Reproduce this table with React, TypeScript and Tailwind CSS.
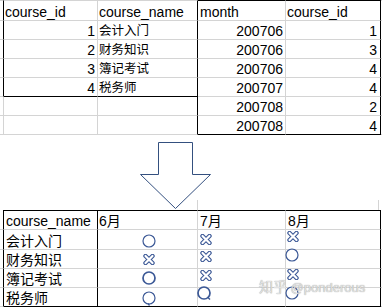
import React from 'react';

// spreadsheet columns: gutter, A, B, C, D, rest
const GRID = 'grid grid-cols-[4px_94px_100px_88px_95px_1fr]';
const BASE =
  'flex items-end overflow-hidden whitespace-nowrap leading-[16px] border-r border-b border-[#d4d4d4]';

const courses = [
  ['1', '会计入门'],
  ['2', '财务知识'],
  ['3', '簿记考试'],
  ['4', '税务师'],
];

const months = [
  ['200706', '1'],
  ['200706', '3'],
  ['200706', '4'],
  ['200707', '4'],
  ['200708', '2'],
  ['200708', '4'],
];

const Cn = ({ children, small }: { children: React.ReactNode; small?: boolean }) => (
  <span className={small ? 'text-[12.5px]' : 'text-[14px]'}>{children}</span>
);

const Circle = ({ bold, tail }: { bold?: boolean; tail?: 'bottom' | 'right' }) => (
  <svg width="14" height="15" viewBox="0 0 14 15" className="block shrink-0">
    <circle cx="7" cy="7" r="6" fill="none" stroke="#3b5896" strokeWidth={bold ? 1.7 : 1.2} />
    {tail === 'bottom' && <path d="M6 12.5 L7.5 14.5" stroke="#3b5896" strokeWidth="1.3" />}
    {tail === 'right' && <path d="M10.5 11 L13 13.5" stroke="#3b5896" strokeWidth="1.4" />}
  </svg>
);

const Cross = () => (
  <svg width="12" height="11" viewBox="0 0 12 11" className="block shrink-0">
    <path d="M2.5 2 L9.5 9 M9.5 2 L2.5 9" stroke="#3b5896" strokeWidth="4.4" strokeLinecap="round" />
    <path d="M2.5 2 L9.5 9 M9.5 2 L2.5 9" stroke="#ffffff" strokeWidth="2.2" strokeLinecap="round" />
  </svg>
);

type Mark = { kind: 'o' | 'ob' | 'oq' | 'or' | 'x'; cls: string };

const table: { name: string; jun: Mark; jul: Mark; aug: Mark }[] = [
  {
    name: '会计入门',
    jun: { kind: 'o', cls: 'pt-[4px] pl-[44px]' },
    jul: { kind: 'x', cls: 'pt-[4px] pl-[2px]' },
    aug: { kind: 'x', cls: 'pt-[1px] pl-[1px]' },
  },
  {
    name: '财务知识',
    jun: { kind: 'x', cls: 'pt-[4px] pl-[45px]' },
    jul: { kind: 'x', cls: 'pt-[1px] pl-[2px]' },
    aug: { kind: 'o', cls: 'mt-[-2px] ml-[-1px]' },
  },
  {
    name: '簿记考试',
    jun: { kind: 'ob', cls: 'pt-[2px] pl-[44px]' },
    jul: { kind: 'x', cls: 'pt-[1px] pl-[2px]' },
    aug: { kind: 'x', cls: 'pt-0 pl-[1px]' },
  },
  {
    name: '税务师',
    jun: { kind: 'oq', cls: 'pt-[3px] pl-[44px]' },
    jul: { kind: 'or', cls: 'mt-[-2px] ml-[-1px]' },
    aug: { kind: 'o', cls: 'mt-[-2px] ml-[-1px]' },
  },
];

const MarkView = ({ m }: { m: Mark }) => {
  if (m.kind === 'x') return <Cross />;
  if (m.kind === 'ob') return <Circle bold />;
  if (m.kind === 'oq') return <Circle tail="bottom" />;
  if (m.kind === 'or') return <Circle bold tail="right" />;
  return <Circle />;
};

export default function App() {
  return (
    <div className="relative w-[382px] h-[307px] overflow-hidden bg-white text-black text-[14px] font-['Liberation_Sans','Noto_Sans_CJK_SC',sans-serif]">
      {/* source tables */}
      <div>
        <div className={`${GRID} h-[21px]`}>
          <div className={`${BASE} border-t border-r-black`} />
          <div className={`${BASE} border-t pl-[1px]`}>course_id</div>
          <div className={`${BASE} border-t border-r-black pl-[1px]`}>course_name</div>
          <div className={`${BASE} border-t border-t-black pl-[2px]`}>month</div>
          <div className={`${BASE} border-t border-t-black border-r-black pl-[1px]`}>course_id</div>
          <div className={`${BASE} border-t border-r-0`} />
        </div>
        {months.map(([month, id], i) => {
          const course = courses[i];
          const last = i === months.length - 1;
          return (
            <div key={i} className={`${GRID} h-[19px]`}>
              <div className={course ? `${BASE} border-r-black` : BASE} />
              <div className={i === 3 ? `${BASE} border-b-black justify-end pr-[2px]` : `${BASE} justify-end pr-[2px]`}>
                {course ? course[0] : ''}
              </div>
              <div className={i === 3 ? `${BASE} border-b-black border-r-black pl-[1px]` : `${BASE} border-r-black pl-[1px]`}>
                {course ? <Cn small>{course[1]}</Cn> : ''}
              </div>
              <div className={last ? `${BASE} border-b-black justify-end pr-[2px]` : `${BASE} justify-end pr-[2px]`}>
                {month}
              </div>
              <div
                className={
                  last
                    ? `${BASE} border-b-black border-r-black justify-end pr-[3px]`
                    : `${BASE} border-r-black justify-end pr-[3px]`
                }
              >
                {id}
              </div>
              <div className={`${BASE} border-r-0`} />
            </div>
          );
        })}
      </div>

      {/* arrow */}
      <div className="h-[65px] pt-[6px]">
        <svg width="72" height="70" viewBox="0 0 72 70" className="block ml-[140px] overflow-visible">
          <path
            d="M18.5 1.5 H52.5 V33.5 H70.5 L35.5 67.5 L0.5 33.5 H18.5 Z"
            fill="#ffffff"
            stroke="#34507f"
            strokeWidth="1"
          />
        </svg>
      </div>

      {/* gridline stubs of the second sheet */}
      <div className={`${GRID} h-[10px]`}>
        <div />
        <div />
        <div className="border-r border-[#d4d4d4]" />
        <div />
        <div className="border-r border-[#d4d4d4] mr-[2px]" />
        <div />
      </div>

      {/* result table */}
      <div className={`${GRID} h-[20px]`}>
        <div className={`${BASE} border-r-black`} />
        <div className={`${BASE} border-t border-t-black border-r-black pl-[2px]`}>course_name</div>
        <div className={`${BASE} border-t border-t-black pl-[1px]`}>
          6<Cn>月</Cn>
        </div>
        <div className={`${BASE} border-t border-t-black pl-[2px]`}>
          7<Cn>月</Cn>
        </div>
        <div className={`${BASE} border-t border-t-black border-r-black pl-[2px]`}>
          8<Cn>月</Cn>
        </div>
        <div className={`${BASE} border-r-0`} />
      </div>
      {table.map((row, i) => {
        const last = i === table.length - 1;
        return (
          <div key={row.name} className={i === 0 ? `${GRID} h-[20px]` : `${GRID} h-[19px]`}>
            <div className={`${BASE} border-r-black`} />
            <div className={last ? `${BASE} border-b-black border-r-black pl-[2px]` : `${BASE} border-r-black pl-[2px]`}>
              <Cn>{row.name}</Cn>
            </div>
            <div className={last ? 'flex items-start overflow-visible border-r border-b border-[#d4d4d4] border-b-black' : 'flex items-start overflow-visible border-r border-b border-[#d4d4d4]'}>
              <div className={row.jun.cls}>
                <MarkView m={row.jun} />
              </div>
            </div>
            <div className={last ? 'flex items-start overflow-visible border-r border-b border-[#d4d4d4] border-b-black' : 'flex items-start overflow-visible border-r border-b border-[#d4d4d4]'}>
              <div className={row.jul.cls}>
                <MarkView m={row.jul} />
              </div>
            </div>
            <div className={last ? 'flex items-start overflow-visible border-r border-b border-[#d4d4d4] border-b-black border-r-black' : 'flex items-start overflow-visible border-r border-b border-[#d4d4d4] border-r-black'}>
              <div className={row.aug.cls}>
                <MarkView m={row.aug} />
              </div>
            </div>
            <div className={`${BASE} border-r-0`} />
          </div>
        );
      })}

      {/* watermark */}
      <div className="absolute left-[259px] top-[278px] whitespace-nowrap text-[13px] leading-[18px] text-[#e2e2e2] [text-shadow:0_0_1px_#8a8a8a]">
        <span className="text-[14px]">知乎</span> @ponderous
      </div>
    </div>
  );
}
